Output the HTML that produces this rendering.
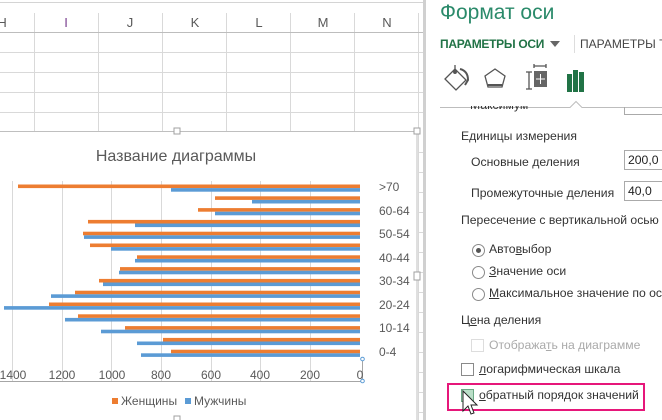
<!DOCTYPE html>
<html><head><meta charset="utf-8"><style>
*{margin:0;padding:0;box-sizing:border-box}
body{width:662px;height:420px;overflow:hidden;background:#fff;font-family:"Liberation Sans","DejaVu Sans",sans-serif;position:relative}
.a{position:absolute;white-space:nowrap}
.p{font-size:12.2px;color:#333}
.u{text-decoration:underline}
.rad{position:absolute;width:13px;height:13px;border:1px solid #8a8a8a;border-radius:50%;background:#fff}
.cb{position:absolute;width:13px;height:13px;border:1px solid #8a8a8a;background:#fff}
</style></head><body>
<svg class="a" style="left:0;top:0" width="430" height="420">
<line x1="0" y1="2.5" x2="425" y2="2.5" stroke="#d4d4d4"/>
<g fill="#595959" font-size="13" font-family="Liberation Sans, sans-serif" text-anchor="middle">
<text x="2" y="27">H</text><text x="66" y="27" fill="#7a3f8f">I</text><text x="130" y="27">J</text><text x="195" y="27">K</text><text x="259" y="27">L</text><text x="323" y="27">M</text><text x="387" y="27">N</text></g>
<g stroke="#d9d9d9"><line x1="34.5" y1="13" x2="34.5" y2="131"/><line x1="98.5" y1="13" x2="98.5" y2="131"/><line x1="162.5" y1="13" x2="162.5" y2="131"/><line x1="226.5" y1="13" x2="226.5" y2="131"/><line x1="290.5" y1="13" x2="290.5" y2="131"/><line x1="354.5" y1="13" x2="354.5" y2="131"/><line x1="418.5" y1="13" x2="418.5" y2="420"/>
<line x1="0" y1="52.5" x2="425" y2="52.5"/><line x1="0" y1="72.5" x2="425" y2="72.5"/><line x1="0" y1="92.5" x2="425" y2="92.5"/><line x1="0" y1="112.5" x2="425" y2="112.5"/>
<line x1="419" y1="152.5" x2="425" y2="152.5"/><line x1="419" y1="172.5" x2="425" y2="172.5"/><line x1="419" y1="192.5" x2="425" y2="192.5"/><line x1="419" y1="212.5" x2="425" y2="212.5"/><line x1="419" y1="232.5" x2="425" y2="232.5"/><line x1="419" y1="252.5" x2="425" y2="252.5"/><line x1="419" y1="272.5" x2="425" y2="272.5"/><line x1="419" y1="292.5" x2="425" y2="292.5"/><line x1="419" y1="312.5" x2="425" y2="312.5"/><line x1="419" y1="332.5" x2="425" y2="332.5"/><line x1="419" y1="352.5" x2="425" y2="352.5"/><line x1="419" y1="372.5" x2="425" y2="372.5"/><line x1="419" y1="392.5" x2="425" y2="392.5"/><line x1="419" y1="412.5" x2="425" y2="412.5"/></g>
<line x1="0" y1="32.5" x2="425" y2="32.5" stroke="#bdbdbd"/>
<rect x="-1" y="131.5" width="418" height="300" fill="#fff" stroke="#bfbfbf"/>
<rect x="174" y="128" width="6" height="6" fill="#fff" stroke="#a0a0a0"/><rect x="414" y="128" width="6" height="6" fill="#fff" stroke="#a0a0a0"/><rect x="414" y="272" width="6" height="8" fill="#fff" stroke="#a0a0a0"/><rect x="174" y="416" width="6" height="6" fill="#fff" stroke="#a0a0a0"/>
<text x="176" y="161" text-anchor="middle" font-size="16" fill="#595959" font-family="Liberation Sans, sans-serif">Название диаграммы</text>
<g stroke="#d9d9d9"><line x1="12.5" y1="181" x2="12.5" y2="381"/><line x1="62.5" y1="181" x2="62.5" y2="381"/><line x1="111.5" y1="181" x2="111.5" y2="381"/><line x1="161.5" y1="181" x2="161.5" y2="381"/><line x1="211.5" y1="181" x2="211.5" y2="381"/><line x1="260.5" y1="181" x2="260.5" y2="381"/><line x1="310.5" y1="181" x2="310.5" y2="381"/></g>
<g fill="#ED7D31">
<rect x="18" y="184.5" width="342" height="3.6"/><rect x="215" y="196.3" width="145" height="3.6"/><rect x="198" y="208.1" width="162" height="3.6"/><rect x="88" y="219.9" width="272" height="3.6"/><rect x="83" y="231.7" width="277" height="3.6"/><rect x="90" y="243.5" width="270" height="3.6"/><rect x="137" y="255.3" width="223" height="3.6"/><rect x="120" y="267.1" width="240" height="3.6"/><rect x="99" y="278.9" width="261" height="3.6"/><rect x="75" y="290.7" width="285" height="3.6"/><rect x="49" y="302.5" width="311" height="3.6"/><rect x="78" y="314.3" width="282" height="3.6"/><rect x="125" y="326.1" width="235" height="3.6"/><rect x="163" y="337.9" width="197" height="3.6"/><rect x="171" y="349.7" width="189" height="3.6"/></g>
<g fill="#5B9BD5">
<rect x="171" y="188.1" width="189" height="3.6"/><rect x="252" y="199.9" width="108" height="3.6"/><rect x="215" y="211.7" width="145" height="3.6"/><rect x="135" y="223.5" width="225" height="3.6"/><rect x="84" y="235.3" width="276" height="3.6"/><rect x="111" y="247.1" width="249" height="3.6"/><rect x="135" y="258.9" width="225" height="3.6"/><rect x="119" y="270.7" width="241" height="3.6"/><rect x="103" y="282.5" width="257" height="3.6"/><rect x="51" y="294.3" width="309" height="3.6"/><rect x="4" y="306.1" width="356" height="3.6"/><rect x="65" y="317.9" width="295" height="3.6"/><rect x="101" y="329.7" width="259" height="3.6"/><rect x="137" y="341.5" width="223" height="3.6"/><rect x="141" y="353.3" width="219" height="3.6"/></g>
<line x1="0" y1="381.5" x2="362" y2="381.5" stroke="#a6a6a6"/>
<line x1="362.5" y1="359" x2="362.5" y2="381" stroke="#a6a6a6"/>
<circle cx="362.5" cy="359" r="1.8" fill="#fff" stroke="#5b9bd5"/><circle cx="362.5" cy="381" r="1.8" fill="#fff" stroke="#5b9bd5"/>
<g fill="#595959" font-size="12" font-family="Liberation Sans, sans-serif">
<text x="379" y="191">&gt;70</text><text x="379" y="215">60-64</text><text x="379" y="238">50-54</text><text x="379" y="262">40-44</text><text x="379" y="285">30-34</text><text x="379" y="309">20-24</text><text x="379" y="332">10-14</text><text x="379" y="356">0-4</text>
<g text-anchor="middle"><text x="13" y="379">1400</text><text x="62" y="379">1200</text><text x="112" y="379">1000</text><text x="161" y="379">800</text><text x="211" y="379">600</text><text x="260" y="379">400</text><text x="310" y="379">200</text><text x="360" y="379">0</text></g>
<rect x="112" y="398" width="6" height="6" fill="#ED7D31"/><text x="121" y="405">Женщины</text>
<rect x="185" y="398" width="6" height="6" fill="#5B9BD5"/><text x="194" y="405">Мужчины</text></g>
</svg>
<div class="a" style="left:423px;top:0;width:3px;height:420px;background:#d0d0d0"></div>
<div class="a" style="left:426px;top:0;width:236px;height:420px;background:#fff"></div>
<div class="a" style="left:440px;top:1px;font-size:21px;color:#2a8a6a">Формат оси</div>
<div class="a" style="left:440px;top:37px;font-size:12px;font-weight:bold;color:#217346;letter-spacing:-0.3px">ПАРАМЕТРЫ ОСИ</div>
<div class="a" style="left:550px;top:41px;width:0;height:0;border-left:5px solid transparent;border-right:5px solid transparent;border-top:6px solid #666"></div>
<div class="a" style="left:574px;top:35px;width:1px;height:18px;background:#ddd"></div>
<div class="a" style="left:580px;top:37px;font-size:12px;color:#444">ПАРАМЕТРЫ Т</div>
<svg class="a" style="left:440px;top:60px" width="222" height="52">
<g fill="none" stroke="#555" stroke-width="1.3"><path d="M5 19 L15 9 L26 20 L16 30 Z"/><path d="M15 9 L15 5"/><circle cx="15" cy="12" r="1.3" fill="#555"/><path d="M20 9 Q28 11 28 20 L25 25" stroke-width="2"/>
<path d="M55 9 L65 16 L62 27 L48 27 L45 16 Z"/><path d="M48 25 L62 25" stroke-width="2"/>
<path d="M86 12 L92 12 M89 12 L89 29 M86 29 L92 29 M94 6 L106 6 M94 4 L94 8 M106 4 L106 8"/></g>
<rect x="94" y="11" width="13" height="16" fill="#666"/><path d="M100.5 14 v10 M96 19 h9" stroke="#fff" stroke-width="1"/>
<rect x="127" y="14" width="5" height="18" fill="#217346"/><rect x="133" y="10" width="5" height="22" fill="#217346"/><rect x="139" y="12" width="5" height="20" fill="#217346"/>
<path d="M0 47.5 H130 L136 41.5 L142 47.5 H222" fill="none" stroke="#bdbdbd"/></svg>
<div class="a p" style="left:470px;top:106px;height:8px;overflow:hidden"><span style="position:relative;top:-8px">Максимум</span></div>
<div class="a" style="left:624px;top:107px;width:40px;height:8px;border:1px solid #aaa;border-top:none"></div>
<div class="a p" style="left:461px;top:129px">Единицы измерения</div>
<div class="a p" style="left:471px;top:155px">Основные деления</div>
<div class="a" style="left:624px;top:150px;width:40px;height:20px;border:1px solid #aaa;font-size:12.2px;padding:2px 0 0 3px;color:#222">200,0</div>
<div class="a p" style="left:471px;top:186px">Промежуточные деления</div>
<div class="a" style="left:624px;top:181px;width:40px;height:20px;border:1px solid #aaa;font-size:12.2px;padding:2px 0 0 3px;color:#222">40,0</div>
<div class="a p" style="left:461px;top:213px">Пересечение с вертикальной осью</div>
<div class="rad" style="left:472px;top:244px"><div style="position:absolute;left:3px;top:3px;width:5px;height:5px;border-radius:50%;background:#555"></div></div>
<div class="a p" style="left:489px;top:242px">Авто<span class="u">в</span>ыбор</div>
<div class="rad" style="left:472px;top:266px"></div>
<div class="a p" style="left:489px;top:264px"><span class="u">З</span>начение оси</div>
<div class="rad" style="left:472px;top:288px"></div>
<div class="a p" style="left:489px;top:286px"><span class="u">М</span>аксимальное значение по оси</div>
<div class="a p" style="left:461px;top:313px">Ц<span class="u">е</span>на деления</div>
<div class="cb" style="left:471px;top:339px;border-color:#ddd"></div>
<div class="a p" style="left:489px;top:338px;color:#aaa">Отобража<span class="u">т</span>ь на диаграмме</div>
<div class="cb" style="left:461px;top:363px"></div>
<div class="a p" style="left:479px;top:362px"><span class="u">л</span>огарифмическая шкала</div>
<div class="a" style="left:447px;top:383px;width:198px;height:28px;border:2px solid #e6177a"></div>
<div class="cb" style="left:461px;top:389px;background:#b9dec7;border-color:#6aa884"></div>
<div class="a p" style="left:479px;top:388px"><span class="u">о</span>братный порядок значений</div>
<svg class="a" style="left:461px;top:390px" width="20" height="28"><path d="M2 1 L2 21 L7 16 L10 24 L13 23 L10 15 L16 15 Z" fill="#fff" stroke="#222" stroke-width="1"/></svg>
</body></html>
